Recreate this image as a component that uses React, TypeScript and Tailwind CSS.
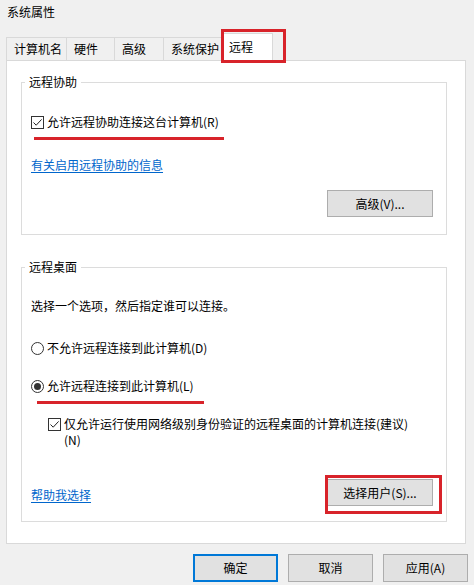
import React from 'react'

const tabs = [
  { label: '计算机名', w: 'w-[60px]' },
  { label: '硬件', w: 'w-[48px]' },
  { label: '高级', w: 'w-[49px]' },
  { label: '系统保护', w: 'w-[58px]' },
]

function CheckBox() {
  return (
    <span className="flex h-[13px] w-[13px] shrink-0 items-center justify-center border border-[#333333] bg-white">
      <svg width="11" height="11" viewBox="0 0 11 11" fill="none">
        <path d="M1.5 5.5 L4.2 8.2 L9.6 2.4" stroke="#222222" strokeWidth="1" />
      </svg>
    </span>
  )
}

function Radio({ checked }: { checked?: boolean }) {
  return (
    <span className="flex h-[13px] w-[13px] shrink-0 items-center justify-center rounded-full border border-[#333333] bg-white">
      {checked && <span className="h-[7px] w-[7px] rounded-full bg-[#333333]" />}
    </span>
  )
}

function WinButton({ children, primary, className }: { children: React.ReactNode; primary?: boolean; className?: string }) {
  return (
    <button
      className={
        'flex items-center justify-center bg-[#e1e1e1] text-[12px] leading-[16px] text-black ' +
        (primary ? 'border-2 border-[#0078d7] ' : 'border border-[#adadad] ') +
        (className ?? '')
      }
    >
      {children}
    </button>
  )
}

export default function App() {
  return (
    <div className="relative h-[585px] w-[474px] overflow-hidden bg-[#f0f0f0] font-['Noto_Sans_CJK_SC','Liberation_Sans',sans-serif] text-[12px] leading-[16px] text-black">
      {/* Title */}
      <div className="h-[24px] pl-[7px] leading-[24px]">系统属性</div>

      {/* Tabs */}
      <div className="relative z-10 mt-[9px] flex h-[27px] items-end pl-[6px]">
        {tabs.map((t) => (
          <div
            key={t.label}
            className={'flex h-[23px] items-center border-l border-t border-[#d9d9d9] bg-[#f0f0f0] pl-[7px] ' + t.w}
          >
            {t.label}
          </div>
        ))}
        <div className="-mb-px flex h-[28px] w-[52px] items-center border-x border-t border-[#d9d9d9] bg-white pl-[7px] pb-[1px]">
          远程
        </div>
      </div>

      {/* Panel */}
      <div className="ml-[6px] h-[484px] w-[460px] border border-[#d9d9d9] bg-white pl-[14px] pr-[18px]">
        {/* 远程协助 */}
        <fieldset className="mt-[13px] border border-[#dcdcdc]">
          <legend className="ml-[3px] px-[4px] leading-[16px]">远程协助</legend>
          <div className="pl-[9px] pr-[13px] pt-[24px] pb-[17px]">
            <div className="flex h-[16px] items-center gap-[3px]">
              <CheckBox />
              <span>允许远程协助连接这台计算机(R)</span>
            </div>
            <div className="mt-[27px] h-[16px]">
              <span className="text-[#0066cc] underline underline-offset-2">有关启用远程协助的信息</span>
            </div>
            <div className="mt-[17px] flex justify-end">
              <WinButton className="h-[27px] w-[106px]">高级(V)...</WinButton>
            </div>
          </div>
        </fieldset>

        {/* 远程桌面 */}
        <fieldset className="mt-[24px] border border-[#dcdcdc]">
          <legend className="ml-[3px] px-[4px] leading-[16px]">远程桌面</legend>
          <div className="pl-[9px] pr-[13px] pt-[23px] pb-[15px]">
            <div className="h-[16px] pl-[-2px]">选择一个选项，然后指定谁可以连接。</div>
            <div className="mt-[26px] flex h-[16px] items-center gap-[3px]">
              <Radio />
              <span>不允许远程连接到此计算机(D)</span>
            </div>
            <div className="mt-[22px] flex h-[16px] items-center gap-[3px]">
              <Radio checked />
              <span>允许远程连接到此计算机(L)</span>
            </div>
            <div className="mt-[22px] ml-[17px] flex items-start gap-[3px]">
              <div className="mt-[2px]">
                <CheckBox />
              </div>
              <span>
                仅允许运行使用网络级别身份验证的远程桌面的计算机连接(建议)
                <br />
                (N)
              </span>
            </div>
            <div className="mt-[31px] flex items-center justify-between">
              <span className="mt-[4px] text-[#0066cc] underline underline-offset-2">帮助我选择</span>
              <WinButton className="h-[27px] w-[106px]">选择用户(S)...</WinButton>
            </div>
          </div>
        </fieldset>
      </div>

      {/* Bottom buttons */}
      <div className="mt-[10px] flex justify-end gap-[10px] pr-[6px]">
        <WinButton primary className="h-[28px] w-[85px]">确定</WinButton>
        <WinButton className="h-[28px] w-[85px]">取消</WinButton>
        <WinButton className="h-[28px] w-[85px]">应用(A)</WinButton>
      </div>

      {/* Red annotations */}
      <div className="pointer-events-none absolute left-[221px] top-[29px] z-20 h-[34px] w-[65px] border-[3px] border-[#d8232a]" />
      <div className="pointer-events-none absolute left-[34px] top-[137px] z-20 h-[3px] w-[190px] bg-[#d8232a]" />
      <div className="pointer-events-none absolute left-[37px] top-[401px] z-20 h-[3px] w-[167px] bg-[#d8232a]" />
      <div className="pointer-events-none absolute left-[325px] top-[475px] z-20 h-[39px] w-[117px] border-[3px] border-[#d8232a]" />
    </div>
  )
}
